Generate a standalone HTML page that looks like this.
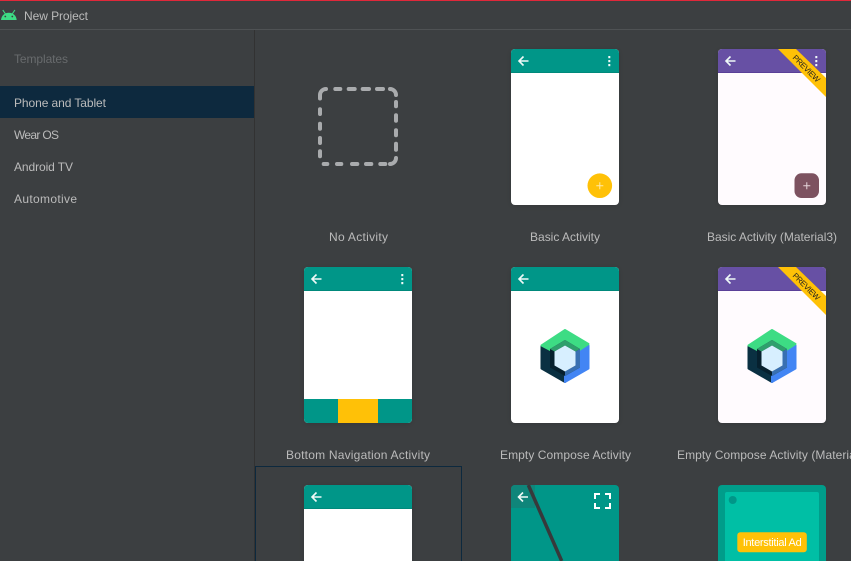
<!DOCTYPE html>
<html><head><meta charset="utf-8"><style>
html,body{margin:0;padding:0;background:#3c3f41;overflow:hidden}
svg{display:block}
text{font-family:"Liberation Sans",sans-serif;font-size:12px;fill:#bbbbbb}
</style></head><body>
<svg width="851" height="561" viewBox="0 0 851 561" xmlns="http://www.w3.org/2000/svg">
<defs>
<filter id="sh" x="-20%" y="-20%" width="140%" height="140%"><feDropShadow dx="0" dy="1" stdDeviation="3" flood-color="#000" flood-opacity="0.13"/></filter>
<clipPath id="c1"><rect x="718" y="49" width="108" height="156" rx="4"/></clipPath>
<clipPath id="c2"><rect x="718" y="267" width="108" height="156" rx="4"/></clipPath>
<clipPath id="c3"><rect x="511" y="485" width="108" height="90" rx="4"/></clipPath>
<g id="back"><path d="M-4.500 0H5M0 -4.500L-4.500 0L0 4.500" fill="none" stroke="#eef9f7" stroke-width="1.600"/></g>
<g id="dots" fill="#f2fbfa"><rect x="-1" y="-5" width="2" height="2.200"/><rect x="-1" y="-1" width="2" height="2.200"/><rect x="-1" y="3" width="2" height="2.200"/></g>
<g id="jc" stroke-linejoin="round">
<path d="M-23.500 -8.500L0 5V27L-23.500 13.500Z" fill="#0a3042" stroke="#0a3042" stroke-width="2"/>
<path d="M23.500 -9.500V13.500L0 27V5Z" fill="#4285f4" stroke="#4285f4" stroke-width="2"/>
<path d="M0 -25L23.500 -11L12 -3.500H-12L-23.500 -9.500Z" fill="#3ddc84" stroke="#3ddc84" stroke-width="2"/>
<path d="M0 -15L15 -6V12.500L0 21L-15 12.500V-6Z" fill="#06202e"/>
<path d="M15 -6V12.500L0 21V16.500L10.500 10.500V-3.500Z" fill="#3870b2"/>
<path d="M0 -15L15 -6L10.500 -3.500L0 -9.500L-10.500 -3.500L-15 -6Z" fill="#2f9f6d"/>
<path d="M0 -9.500L10.500 -3.500V10.500L0 16.500L-10.500 10.500V-3.500Z" fill="#d7efff"/>
</g>
</defs>
<rect width="851" height="561" fill="#3c3f41"/>
<rect width="851" height="1" fill="#e0283a"/>
<rect y="29" width="851" height="1" fill="#4f5254"/>
<path d="M1 20C1.400 15.500 4.500 12.700 8.800 12.700C13.100 12.700 16.300 15.500 16.700 20Z" fill="#3ddc84"/>
<path d="M2.800 10L5.500 14M14.900 10L12.200 14" stroke="#3ddc84" stroke-width="1.100" fill="none"/>
<circle cx="5.300" cy="16.500" r="0.900" fill="#3c3f41"/><circle cx="12.300" cy="16.500" r="0.900" fill="#3c3f41"/>
<text x="24" y="20" textLength="64">New Project</text>
<rect x="254" y="30" width="1" height="531" fill="#323232"/>
<text x="14" y="63" textLength="54" style="fill:#686b6d">Templates</text>
<rect y="86" width="254" height="32" fill="#0d293e"/>
<text x="14" y="107" textLength="92">Phone and Tablet</text>
<text x="14" y="139" textLength="45">Wear OS</text>
<text x="14" y="171" textLength="59">Android TV</text>
<text x="14" y="203" textLength="63">Automotive</text>

<!-- No Activity -->
<path fill="none" stroke="#a9abad" stroke-width="4" stroke-linecap="round" d="M320 98.500V95a6 6 0 0 1 6-6M335.300 89H340.300M348.700 89H354.700M362.700 89H369M377 89H383M390 89a6 6 0 0 1 6 6M396 102V106.300M396 115.300V120.700M396 130.300V135.300M396 143.700V149.700M396 158a6 6 0 0 1-6 6M385.300 164H380.300M371.300 164H366M357.300 164H352M341.300 164H337M327.300 164H323.700M320 156.300V151.300M320 143V138M320 128.700V123.700M320 114V109.300"/>
<text x="329" y="241" textLength="59">No Activity</text>

<!-- Basic -->
<g filter="url(#sh)"><rect x="511" y="49" width="108" height="156" rx="4" fill="#fff"/></g>
<path d="M511 73V53a4 4 0 0 1 4-4H615a4 4 0 0 1 4 4V73Z" fill="#009688"/>
<rect x="511" y="72" width="108" height="1" fill="#00897b"/>
<use href="#back" x="523.500" y="61"/><use href="#dots" x="609.300" y="61"/>
<circle cx="599.800" cy="185.700" r="12.300" fill="#ffc107"/>
<path d="M596.300 185.700H603.300M599.800 182.200V189.200" stroke="#ffe9a8" stroke-width="1"/>
<text x="530" y="241" textLength="70">Basic Activity</text>

<!-- Basic M3 -->
<g filter="url(#sh)"><rect x="718" y="49" width="108" height="156" rx="4" fill="#fffbfe"/></g>
<path d="M718 73V53a4 4 0 0 1 4-4H822a4 4 0 0 1 4 4V73Z" fill="#6750a4"/>
<rect x="718" y="72" width="108" height="1" fill="#5a3f98"/>
<use href="#back" x="730.500" y="61"/><use href="#dots" x="816.300" y="61"/>
<rect x="794.500" y="173.300" width="24.500" height="24.700" rx="7" fill="#7d5260"/>
<path d="M803.300 185.700H810.300M806.800 182.200V189.200" stroke="#e6d5da" stroke-width="1"/>
<g clip-path="url(#c1)">
<path d="M778 49H796L826 78V97Z" fill="#ffc107"/>
<text transform="translate(804.500 70.500) rotate(45)" text-anchor="middle" textLength="35" style="font-size:8px;fill:#222">PREVIEW</text>
</g>
<text x="707" y="241" textLength="130">Basic Activity (Material3)</text>

<!-- Bottom Nav -->
<g filter="url(#sh)"><rect x="304" y="267" width="108" height="156" rx="4" fill="#fff"/></g>
<path d="M304 291V271a4 4 0 0 1 4-4H408a4 4 0 0 1 4 4V291Z" fill="#009688"/>
<rect x="304" y="290" width="108" height="1" fill="#00897b"/>
<use href="#back" x="316.500" y="279"/><use href="#dots" x="402.300" y="279"/>
<path d="M304 399H412V419a4 4 0 0 1-4 4H308a4 4 0 0 1-4-4Z" fill="#009688"/>
<rect x="338" y="399" width="40" height="24" fill="#ffc107"/>
<text x="286" y="459" textLength="144">Bottom Navigation Activity</text>

<!-- Empty Compose -->
<g filter="url(#sh)"><rect x="511" y="267" width="108" height="156" rx="4" fill="#fff"/></g>
<path d="M511 291V271a4 4 0 0 1 4-4H615a4 4 0 0 1 4 4V291Z" fill="#009688"/>
<rect x="511" y="290" width="108" height="1" fill="#00897b"/>
<use href="#back" x="523.500" y="279"/>
<use href="#jc" x="565" y="355"/>
<text x="500" y="459" textLength="131">Empty Compose Activity</text>

<!-- Empty Compose M3 -->
<g filter="url(#sh)"><rect x="718" y="267" width="108" height="156" rx="4" fill="#fffbfe"/></g>
<path d="M718 291V271a4 4 0 0 1 4-4H822a4 4 0 0 1 4 4V291Z" fill="#6750a4"/>
<rect x="718" y="290" width="108" height="1" fill="#5a3f98"/>
<use href="#back" x="730.500" y="279"/>
<g clip-path="url(#c2)">
<path d="M778 267H796L826 296V315Z" fill="#ffc107"/>
<text transform="translate(804.500 288.500) rotate(45)" text-anchor="middle" textLength="35" style="font-size:8px;fill:#222">PREVIEW</text>
</g>
<use href="#jc" x="772" y="355"/>
<text x="677" y="459" style="letter-spacing:.07px">Empty Compose Activity (Material3)</text>

<!-- Row 3: selected -->
<rect x="255.500" y="466.500" width="206" height="110" fill="none" stroke="#0d293e"/>
<g filter="url(#sh)"><rect x="304" y="485" width="108" height="90" rx="4" fill="#fff"/></g>
<path d="M304 509V489a4 4 0 0 1 4-4H408a4 4 0 0 1 4 4V509Z" fill="#009688"/>
<rect x="304" y="508" width="108" height="1" fill="#00897b"/>
<use href="#back" x="316.500" y="497"/>

<!-- Fullscreen -->
<g clip-path="url(#c3)">
<rect x="511" y="485" width="108" height="90" fill="#009688"/>
<rect x="511" y="485" width="24" height="23" fill="#0f857a"/>
<path d="M528.300 485L561.700 561" stroke="#37393b" stroke-width="3.500"/>
</g>
<use href="#back" x="523" y="497"/>
<path d="M595 499V494H600M605 494H610V499M610 503V508H605M600 508H595V503" fill="none" stroke="#fff" stroke-width="2"/>

<!-- Interstitial -->
<rect x="718" y="485" width="108" height="90" rx="4" fill="#009d8a"/>
<rect x="725" y="492" width="94" height="80" rx="2" fill="#00bfa5"/>
<circle cx="732.700" cy="500" r="4" fill="#009688"/>
<rect x="737.300" y="532.300" width="69.500" height="20" rx="3" fill="#ffc107"/>
<text x="742.700" y="546" textLength="59" style="font-size:11px;fill:#fff">Interstitial Ad</text>
</svg>
</body></html>
